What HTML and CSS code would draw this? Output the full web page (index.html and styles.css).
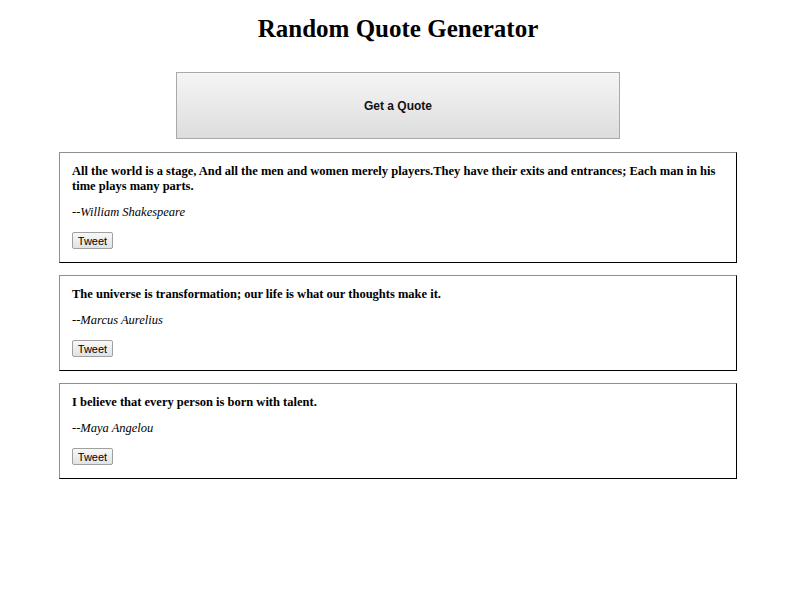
FILE: index.html
```html
<!DOCTYPE html>
<html>
<head>
<meta charset="utf-8">
<title>Random Quote Generator</title>
<link rel="stylesheet" href="styles.css">
</head>
<body>
<div class="page">
  <h1 class="title">Random Quote Generator</h1>
  <div class="action">
    <button class="get-quote">Get a Quote</button>
  </div>
  <div class="quotes">
    <div class="card">
      <p class="quote">All the world is a stage, And all the men and women merely players.They have their exits and entrances; Each man in his time plays many parts.</p>
      <p class="author">--<em>William Shakespeare</em></p>
      <button class="tweet">Tweet</button>
    </div>
    <div class="card">
      <p class="quote">The universe is transformation; our life is what our thoughts make it.</p>
      <p class="author">--<em>Marcus Aurelius</em></p>
      <button class="tweet">Tweet</button>
    </div>
    <div class="card">
      <p class="quote">I believe that every person is born with talent.</p>
      <p class="author">--<em>Maya Angelou</em></p>
      <button class="tweet">Tweet</button>
    </div>
  </div>
</div>
</body>
</html>
```

FILE: styles.css
```css
html, body {
  margin: 0;
  padding: 0;
  background: #fff;
}
body {
  font-family: "Liberation Serif", "Times New Roman", serif;
  color: #000;
}
.page {
  margin-right: 4px;
}
.title {
  margin: 14px 0 0;
  text-align: center;
  font-size: 25px;
  line-height: 30px;
  font-weight: bold;
}
.action {
  display: flex;
  justify-content: center;
  margin-top: 28px;
}
.get-quote {
  width: 444px;
  height: 67px;
  border: 1px solid #a9a9a9;
  background: linear-gradient(#f5f5f5, #dddddd);
  font-family: "Liberation Sans", Arial, sans-serif;
  font-size: 12px;
  font-weight: bold;
  color: #111;
  padding: 0;
}
.quotes {
  display: flex;
  flex-direction: column;
  gap: 12px;
  margin: 13px 59px 0 59px;
}
.card {
  border: 1px solid #000;
  border-top-color: #8f8f8f;
  border-left-color: #8f8f8f;
  padding: 11px 12px 13px 12px;
}
.quote {
  margin: 0;
  font-size: 12.5px;
  line-height: 15px;
  font-weight: bold;
}
.author {
  margin: 11px 0 0;
  font-size: 12.5px;
  line-height: 15px;
}
.author em {
  font-style: italic;
}
.tweet {
  display: block;
  margin-top: 12px;
  width: 41px;
  height: 17px;
  padding: 0;
  border: 1px solid #a0a0a0;
  border-radius: 2px;
  background: linear-gradient(#f8f8f8, #e2e2e2);
  font-family: "Liberation Sans", Arial, sans-serif;
  font-size: 11px;
  color: #000;
}
```
